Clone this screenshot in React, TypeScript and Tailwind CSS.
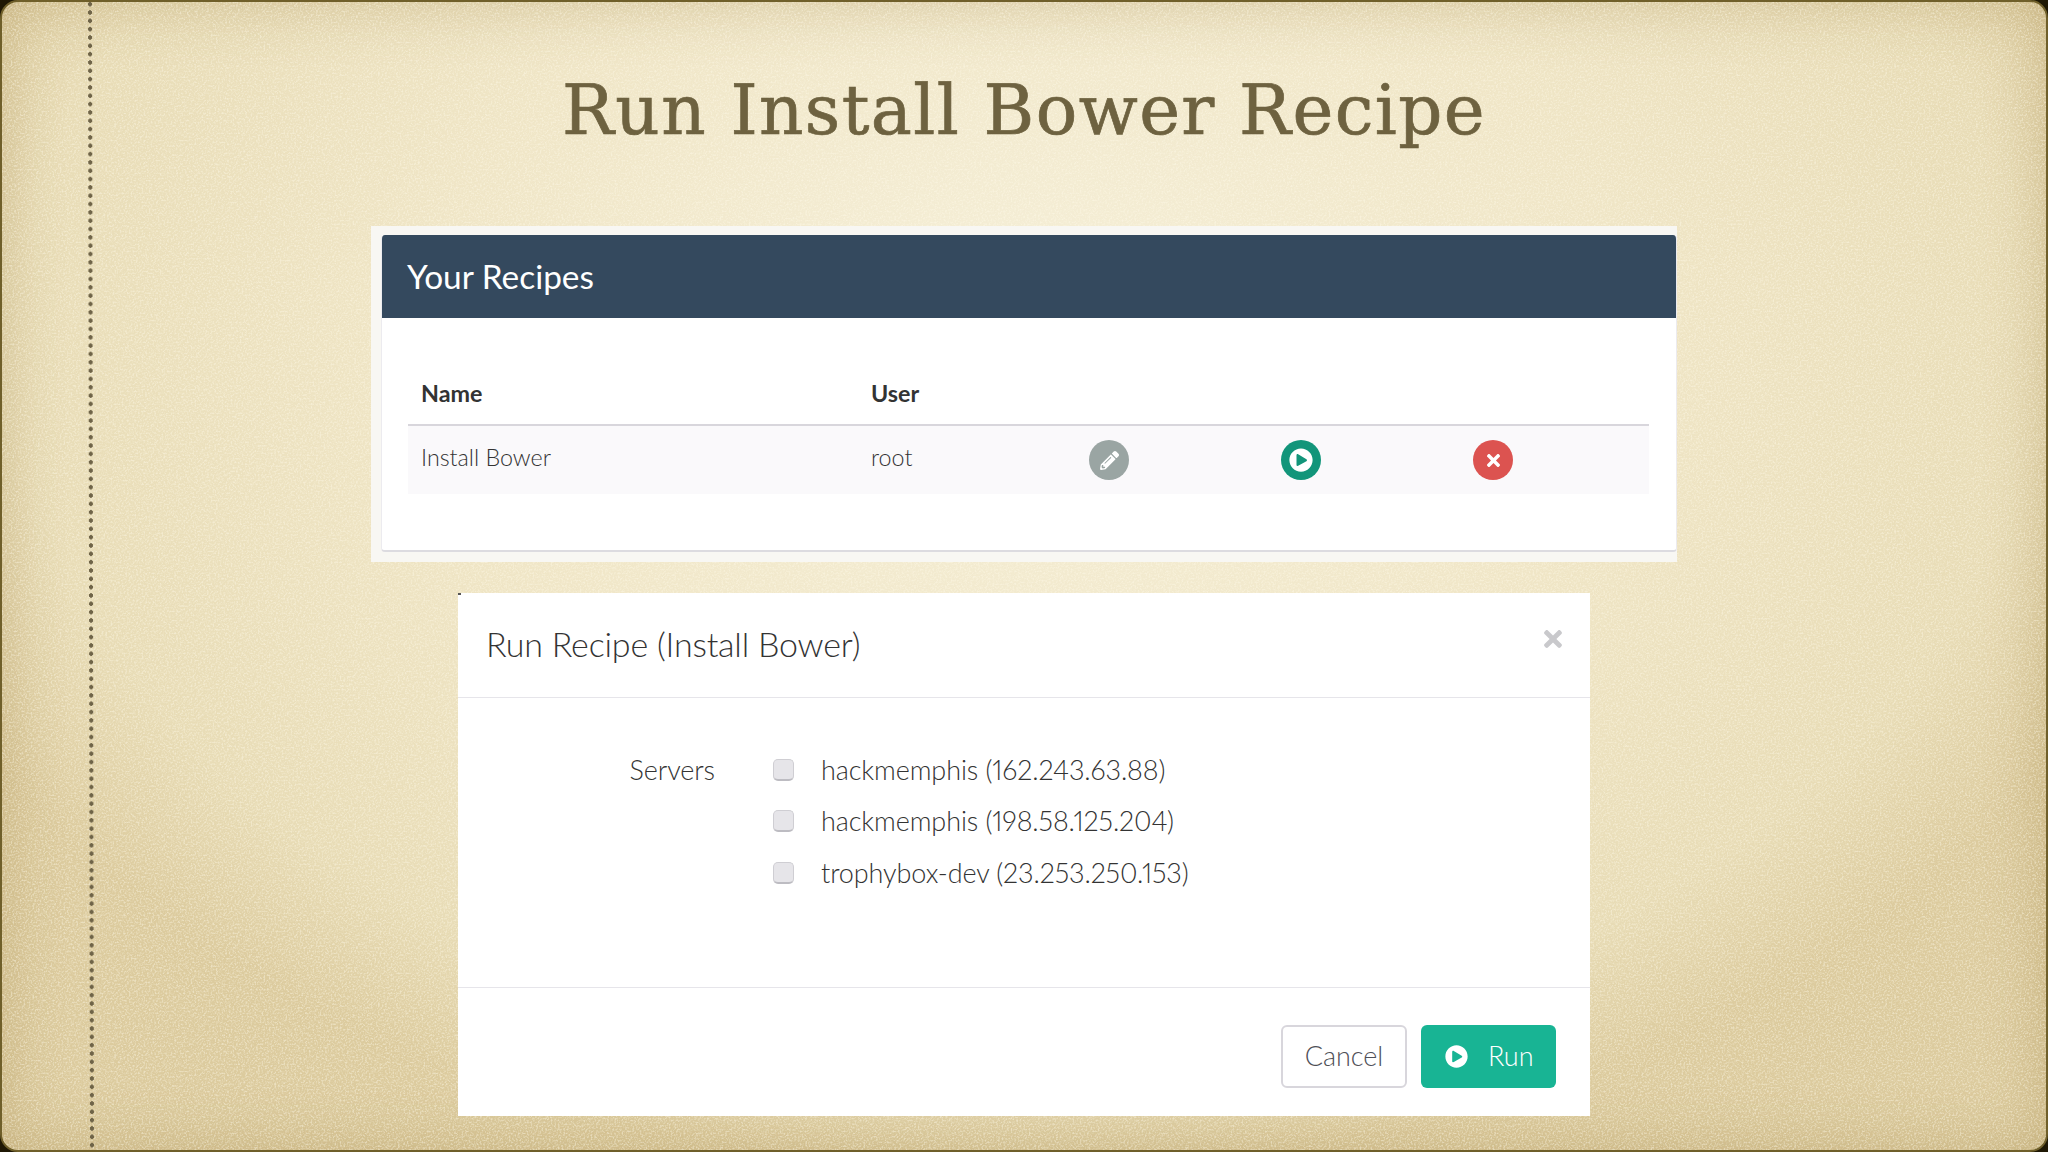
import { FaPencilAlt, FaPlayCircle, FaTimes } from "react-icons/fa";

const servers = [
  "hackmemphis (162.243.63.88)",
  "hackmemphis (198.58.125.204)",
  "trophybox-dev (23.253.250.153)",
];

export default function App() {
  return (
    <div className="w-full h-screen overflow-hidden bg-[#1f1804]">
      <div className="relative w-full h-full overflow-hidden rounded-[18px] border-2 border-[#6f5f2a] bg-[radial-gradient(ellipse_58%_72%_at_50%_30%,#f6f0da_0%,#f0e6c7_50%,#e8dcb6_85%,#dccb9e_100%)] shadow-[inset_0_0_60px_rgba(140,110,40,0.32)] font-['Lato',sans-serif]">
        <svg className="absolute inset-0 w-full h-full opacity-[0.45] pointer-events-none">
          <filter id="grain">
            <feTurbulence type="fractalNoise" baseFrequency="0.55" numOctaves="2" />
            <feColorMatrix values="0 0 0 0 1 0 0 0 0 0.96 0 0 0 0 0.82 3 0 0 0 -1.3" />
          </filter>
          <rect width="100%" height="100%" filter="url(#grain)" />
        </svg>
        <div className="absolute left-[87px] -top-[2px] w-[4px] h-[1156px] -rotate-[0.1deg] bg-[radial-gradient(circle,#6f6448_1.9px,transparent_2.2px)] bg-[length:4px_8.33px]" />

        <div className="relative flex flex-col items-center -mt-[2px]">
          <div className="h-[226px] pt-[70px]">
            <h1 className="font-['DejaVu_Serif',serif] text-[69px] leading-[80px] tracking-[1.4px] text-[#6e6240] [-webkit-text-stroke:0.7px_#6e6240]">Run Install Bower Recipe</h1>
          </div>

          <div className="w-[1306px] pt-[9px] pb-[10px] pl-[10px] bg-[#f8f7f3]">
            <div className="bg-white rounded-[4px] border-x border-[#ecebef] border-b-2 border-b-[#dcdbe0] overflow-hidden">
              <div className="h-[83px] bg-[#34495e] pl-[25px] flex items-center text-[33.4px] text-white">Your Recipes</div>
              <div className="pl-[26px] pr-[27px] pt-[45px] pb-[56px] text-[#333]">
                <div className="grid grid-cols-[450px_231px_192px_192px_1fr] h-[63px] items-center border-b-2 border-[#d8d6dc] text-[23.3px] font-bold">
                  <span className="pl-[13px]">Name</span>
                  <span className="pl-[13px]">User</span>
                </div>
                <div className="grid grid-cols-[450px_231px_192px_192px_1fr] h-[68px] items-center bg-[#faf9fb] text-[23.3px] font-light">
                  <span className="pl-[13px] pb-[5px]">Install Bower</span>
                  <span className="pl-[13px] pb-[5px]">root</span>
                  <span className="w-[40px] h-[40px] rounded-full bg-[#9aa5a3] flex items-center justify-center text-white text-[19px]">
                    <FaPencilAlt />
                  </span>
                  <span className="w-[40px] h-[40px] rounded-full bg-[#12957a] flex items-center justify-center text-white text-[24px]">
                    <FaPlayCircle />
                  </span>
                  <span className="w-[40px] h-[40px] rounded-full bg-[#dc5350] flex items-center justify-center text-white text-[19px]">
                    <FaTimes />
                  </span>
                </div>
              </div>
            </div>
          </div>

          <div className="relative w-[1132px] mt-[31px] bg-white text-[#333]">
            <span className="absolute left-0 top-0 w-[3px] h-[2px] bg-[#555]" />
            <div className="h-[105px] pb-[4px] border-b border-[#e6e5ea] pl-[28px] flex items-center text-[34px] font-light tracking-[-0.2px]">Run Recipe (Install Bower)</div>
            <FaTimes className="absolute top-[33px] right-[24px] text-[#c9c9cc] text-[26px]" />
            <div className="h-[290px] border-b border-[#e6e5ea] pt-[46px] flex items-start text-[27px] font-light tracking-[-0.1px]">
              <span className="w-[315px] text-right leading-[51px] pr-[58px] shrink-0">Servers</span>
              <div className="flex flex-col proportional-nums">
                {servers.map((s) => (
                  <div key={s} className="h-[51.5px] flex items-center">
                    <span className="w-[21px] h-[22px] rounded-[5px] bg-[#e6e5e9] border border-[#cfced3] border-b-2 border-b-[#bdbcc2] shrink-0" />
                    <span className="ml-[27px]">{s}</span>
                  </div>
                ))}
              </div>
            </div>
            <div className="flex justify-end gap-[14px] pt-[37px] pb-[28px] pr-[34px] text-[27px] font-light">
              <button className="w-[126px] h-[63px] rounded-[6px] border-2 border-[#d8d6dc] text-[#4f4f57]">Cancel</button>
              <button className="w-[135px] h-[63px] rounded-[6px] bg-[#18b494] text-white flex items-center pl-[24px] gap-[20px]">
                <FaPlayCircle className="text-[23px]" />
                Run
              </button>
            </div>
          </div>
        </div>
      </div>
    </div>
  );
}
